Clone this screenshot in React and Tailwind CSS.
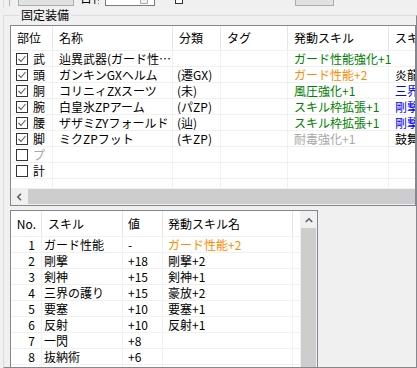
import React from "react";

const F = { fontFamily: '"Noto Sans CJK JP", "Noto Sans", sans-serif' };

function Check({ checked }) {
  return (
    <span className="w-[12px] h-[12px] border border-[#333333] bg-white flex items-center justify-center shrink-0">
      {checked && (
        <svg width="10" height="10" viewBox="0 0 10 10">
          <path d="M1.5 5 L4 7.5 L8.5 2" stroke="#5a5a5a" strokeWidth="1.1" fill="none" />
        </svg>
      )}
    </span>
  );
}

const upperRows = [
  { c: true, p: "武", n: "辿異武器(ガード性…", k: "", s: "ガード性能強化+1", sc: "text-[#008000]", x: "", xc: "text-black" },
  { c: true, p: "頭", n: "ガンキンGXヘルム", k: "(遷GX)", s: "ガード性能+2", sc: "text-[#ff8c00]", x: "炎龍の怒り", xc: "text-black" },
  { c: true, p: "胴", n: "コリニィZXスーツ", k: "(未)", s: "風圧強化+1", sc: "text-[#008000]", x: "三界の護り", xc: "text-[#0000ff]" },
  { c: true, p: "腕", n: "白皇氷ZPアーム", k: "(パZP)", s: "スキル枠拡張+1", sc: "text-[#008000]", x: "剛撃", xc: "text-[#0000ff]" },
  { c: true, p: "腰", n: "ザザミZYフォールド", k: "(辿)", s: "スキル枠拡張+1", sc: "text-[#008000]", x: "剛撃", xc: "text-[#0000ff]" },
  { c: true, p: "脚", n: "ミクZPフット", k: "(キZP)", s: "耐毒強化+1", sc: "text-[#a9a9a9]", x: "鼓舞", xc: "text-black" },
  { c: false, p: "プ", pc: "text-[#a9a9a9]", n: "", k: "", s: "", sc: "", x: "", xc: "" },
  { c: false, p: "計", n: "", k: "", s: "", sc: "", x: "", xc: "" },
];

const lowerRows = [
  ["1", "ガード性能", "-", "ガード性能+2", "text-[#ff8c00]"],
  ["2", "剛撃", "+18", "剛撃+2", "text-black"],
  ["3", "剣神", "+15", "剣神+1", "text-black"],
  ["4", "三界の護り", "+15", "豪放+2", "text-black"],
  ["5", "要塞", "+10", "要塞+1", "text-black"],
  ["6", "反射", "+10", "反射+1", "text-black"],
  ["7", "一閃", "+8", "", "text-black"],
  ["8", "抜納術", "+6", "", "text-black"],
  ["9", "耐状態異常", "+5", "", "text-black"],
];

export default function App() {
  return (
    <div
      className="w-[417px] h-[368px] bg-[#f0f0f0] overflow-hidden text-[12px] leading-[14px] text-black"
      style={F}
    >
      {/* cut-off toolbar */}
      <div className="ml-[3px] h-[8px] border-l border-[#dcdcdc]">
        <div className="h-[6px] flex overflow-hidden">
          <div className="ml-[5px] w-[1px] h-full bg-[#b4b4b4]" />
          <div className="ml-[8px] w-[56px] h-full border-x border-b border-[#adadad] bg-[#e1e1e1]" />
          <div className="ml-[6px] w-[19px] h-full overflow-hidden">
            <div className="mt-[-9px] whitespace-nowrap">日付</div>
          </div>
          <div className="ml-[6px] w-[50px] h-full border-x border-b border-[#7a7a7a] bg-white flex justify-end pr-[6px]">
            <div className="w-[8px] h-[4px] border-x border-b border-[#adadad] bg-[#f0f0f0]" />
          </div>
          <div className="ml-[20px] w-[8px] h-[4px] border-x border-b border-[#333333] bg-white" />
          <div className="ml-[112px] w-[39px] h-full border-x border-b border-[#adadad] bg-[#e1e1e1]" />
        </div>
      </div>

      <fieldset className="ml-[3px] w-[414px] h-[360px] border border-[#dcdcdc] border-b-[#828790] border-r-[#828790] pl-[6px] pt-[3px] min-w-0">
        <legend className="ml-[9px] px-[2px] leading-[14px]">固定装備</legend>

        {/* upper list */}
        <div className="w-[406px] h-[181px] border border-[#828790] bg-white flex flex-col overflow-hidden">
          <div className="flex h-[24px] shrink-0 items-center whitespace-nowrap">
            <div className="w-[42px] h-full flex items-center pl-[6px] border-r border-[#e5e5e5] shrink-0">部位</div>
            <div className="w-[120px] h-full flex items-center pl-[6px] border-r border-[#e5e5e5] shrink-0">名称</div>
            <div className="w-[48px] h-full flex items-center pl-[6px] border-r border-[#e5e5e5] shrink-0">分類</div>
            <div className="w-[67px] h-full flex items-center pl-[6px] border-r border-[#e5e5e5] shrink-0">タグ</div>
            <div className="w-[101px] h-full flex items-center pl-[6px] border-r border-[#e5e5e5] shrink-0">発動スキル</div>
            <div className="w-[100px] h-full flex items-center pl-[6px] shrink-0">スキル枠</div>
          </div>
          {upperRows.map((r, i) => (
            <div key={i} className="flex h-[16px] shrink-0 border-t border-[#f0f0f0] whitespace-nowrap">
              <div className="w-[42px] h-full flex items-center pl-[5px] gap-[5px] border-r border-[#f0f0f0] shrink-0">
                <Check checked={r.c} />
                <span className={r.pc || "text-black"}>{r.p}</span>
              </div>
              <div className="w-[120px] h-full flex items-center pl-[6px] border-r border-[#f0f0f0] shrink-0 overflow-hidden">
                <span className="truncate">{r.n}</span>
              </div>
              <div className="w-[48px] h-full flex items-center pl-[4px] border-r border-[#f0f0f0] shrink-0 overflow-hidden">{r.k}</div>
              <div className="w-[67px] h-full border-r border-[#f0f0f0] shrink-0" />
              <div className={"w-[101px] h-full flex items-center pl-[6px] border-r border-[#f0f0f0] shrink-0 " + r.sc}>{r.s}</div>
              <div className={"w-[100px] h-full flex items-center pl-[6px] shrink-0 " + r.xc}>{r.x}</div>
            </div>
          ))}
          <div className="flex h-[10px] shrink-0 border-t border-[#f0f0f0]">
            <div className="w-[42px] h-full border-r border-[#f0f0f0] shrink-0" />
            <div className="w-[120px] h-full border-r border-[#f0f0f0] shrink-0" />
            <div className="w-[48px] h-full border-r border-[#f0f0f0] shrink-0" />
            <div className="w-[67px] h-full border-r border-[#f0f0f0] shrink-0" />
            <div className="w-[101px] h-full border-r border-[#f0f0f0] shrink-0" />
          </div>
          {/* horizontal scrollbar */}
          <div className="flex h-[17px] shrink-0 bg-[#f0f0f0] py-[1px]">
            <div className="w-[17px] h-full flex items-center justify-center shrink-0">
              <svg width="7" height="8" viewBox="0 0 7 8">
                <path d="M5 0.8 L1.8 4 L5 7.2" stroke="#606060" strokeWidth="1.6" fill="none" />
              </svg>
            </div>
            <div className="flex-1 h-full bg-[#cdcdcd]" />
          </div>
        </div>

        {/* lower list */}
        <div className="mt-[4px] w-[308px] h-[158px] border border-[#828790] bg-white flex overflow-hidden">
          <div className="w-[289px] flex flex-col shrink-0 whitespace-nowrap">
            <div className="flex h-[25px] shrink-0">
              <div className="w-[31px] h-full flex items-center justify-end pr-[5px] border-r border-[#e5e5e5] shrink-0">No.</div>
              <div className="w-[81px] h-full flex items-center pl-[6px] border-r border-[#e5e5e5] shrink-0">スキル</div>
              <div className="w-[40px] h-full flex items-center pl-[5px] border-r border-[#e5e5e5] shrink-0">値</div>
              <div className="w-[130px] h-full flex items-center pl-[5px] border-r border-[#e5e5e5] shrink-0">発動スキル名</div>
            </div>
            {lowerRows.map((r, i) => (
              <div key={i} className="flex h-[16px] shrink-0 border-t border-[#f0f0f0]">
                <div className="w-[31px] h-full flex items-center justify-end pr-[6px] border-r border-[#f0f0f0] shrink-0">{r[0]}</div>
                <div className="w-[81px] h-full flex items-center pl-[2px] border-r border-[#f0f0f0] shrink-0">{r[1]}</div>
                <div className="w-[40px] h-full flex items-center pl-[5px] border-r border-[#f0f0f0] shrink-0">{r[2]}</div>
                <div className={"w-[130px] h-full flex items-center pl-[5px] border-r border-[#f0f0f0] shrink-0 " + r[4]}>{r[3]}</div>
              </div>
            ))}
          </div>
          {/* vertical scrollbar */}
          <div className="w-[17px] h-full flex flex-col bg-[#f0f0f0] shrink-0">
            <div className="h-[17px] flex items-center justify-center shrink-0">
              <svg width="8" height="6" viewBox="0 0 8 6">
                <path d="M0.8 5 L4 1.8 L7.2 5" stroke="#606060" strokeWidth="1.6" fill="none" />
              </svg>
            </div>
            <div className="flex-1 mx-[1px] bg-[#cdcdcd]" />
          </div>
        </div>
      </fieldset>
    </div>
  );
}
